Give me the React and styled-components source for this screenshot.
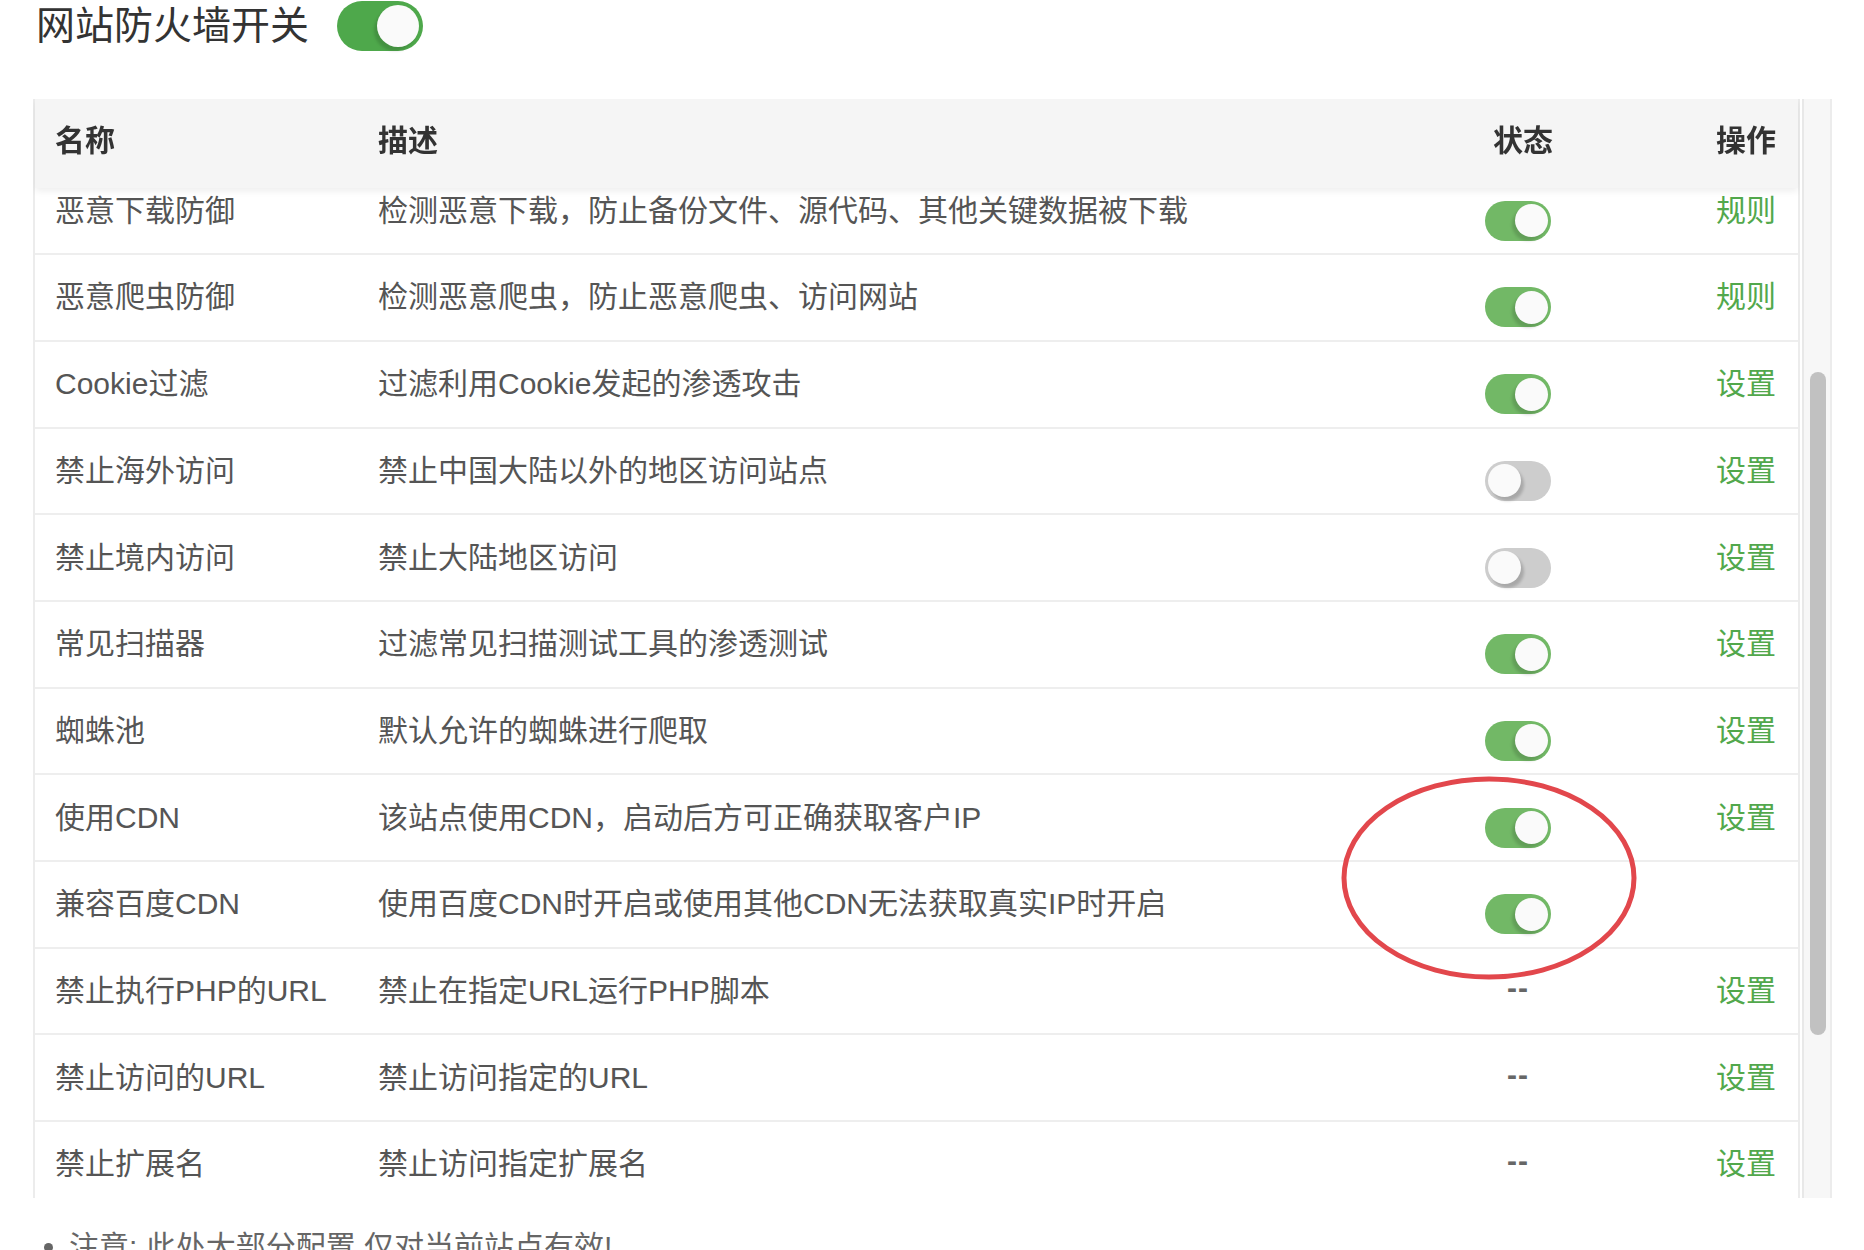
import React, { useLayoutEffect, useRef } from 'react';
import styled, { createGlobalStyle } from 'styled-components';

const GlobalStyle = createGlobalStyle`
  html, body {
    margin: 0;
    padding: 0;
    background: #fff;
  }
  body {
    font-family: "Liberation Sans", "Noto Sans CJK SC", sans-serif;
    color: #555;
    overflow: hidden;
  }
`;

const VIEW_HEIGHT = 1099;
const HEAD_HEIGHT = 89;
const ROW_HEIGHT = 86.7;
const SCROLL_TOP = 453;

const Page = styled.div`
  position: relative;
  width: 1864px;
  height: 1250px;
  overflow: hidden;
  box-sizing: border-box;
  padding: 0 32px 0 33px;
`;

const TitleRow = styled.div`
  display: flex;
  align-items: center;
  gap: 28px;
  height: 52px;
  padding-left: 3px;
`;

const Title = styled.h2`
  margin: 0;
  font-size: 39px;
  font-weight: 400;
  line-height: 52px;
  color: #333;
`;

const Track = styled.span`
  display: inline-flex;
  align-items: center;
  justify-content: ${p => (p.$on ? 'flex-end' : 'flex-start')};
  box-sizing: border-box;
  flex-shrink: 0;
  width: ${p => (p.$lg ? 86 : 66)}px;
  height: ${p => (p.$lg ? 50 : 40)}px;
  padding: 0 ${p => (p.$lg ? 4 : 3)}px;
  margin-top: ${p => (p.$lg ? 0 : 26)}px;
  border-radius: 999px;
  background: ${p => (p.$on ? (p.$lg ? '#4ea84b' : '#72b866') : '#cdcdcd')};
`;

const Knob = styled.span`
  width: ${p => (p.$lg ? 42 : 33)}px;
  height: ${p => (p.$lg ? 42 : 33)}px;
  border-radius: 50%;
  background: #fafafa;
  box-shadow: ${p => (p.$on
    ? '-3px 4px 3px rgba(0, 0, 0, 0.14)'
    : '3px 4px 3px rgba(0, 0, 0, 0.18)')};
`;

const TableBox = styled.div`
  display: flex;
  gap: 2px;
  margin-top: 47px;
  height: ${VIEW_HEIGHT}px;
`;

const ScrollBody = styled.div`
  flex: 1;
  min-width: 0;
  overflow: hidden;
`;

const ScrollBar = styled.div`
  width: 30px;
  flex-shrink: 0;
  box-sizing: border-box;
  background: #f7f7f7;
  border-left: 2px solid #e8e8e8;
  border-right: 2px solid #ececec;
  padding-left: 6px;
`;

const Thumb = styled.div`
  width: 16px;
  border-radius: 8px;
  background: #c1c1c1;
`;

const Table = styled.div`
  border-left: 2px solid #ececec;
  border-right: 2px solid #ececec;
`;

const columns = '323px 1fr 160px 200px';

const HeadRow = styled.div`
  position: sticky;
  top: 0;
  z-index: 2;
  display: grid;
  grid-template-columns: ${columns};
  align-items: center;
  box-sizing: border-box;
  height: ${HEAD_HEIGHT}px;
  padding-bottom: 12px;
  background: #f5f5f5;
  box-shadow: 0 3px 7px rgba(0, 0, 0, 0.07);
  font-size: 30px;
  font-weight: 700;
  color: #333;
`;

const Row = styled.div`
  display: grid;
  grid-template-columns: ${columns};
  align-items: center;
  box-sizing: border-box;
  height: ${ROW_HEIGHT}px;
  padding-bottom: 6px;
  border-bottom: 2px solid #eeeeee;
  font-size: 30px;
  color: #555;
`;

const Cell = styled.div`
  display: flex;
  justify-content: ${p => p.$align || 'flex-start'};
  padding: 0 ${p => (p.$right ? 22 : 20)}px 0 ${p => p.$indent || 20}px;
  white-space: nowrap;
`;

const Dash = styled.span`
  color: #666;
  font-size: 30px;
  font-weight: 700;
  letter-spacing: 1px;
`;

const ActionLink = styled.a`
  color: #52a84c;
  text-decoration: none;
  cursor: pointer;
`;

const Notes = styled.ul`
  margin: 29px 0 0;
  padding-left: 36px;
  font-size: 30px;
  line-height: 40px;
  color: #666;
`;

const Annotation = styled.svg`
  position: absolute;
  left: 1341px;
  top: 776px;
  overflow: visible;
  pointer-events: none;
`;

const rules = [
  { name: 'CC防御', desc: '防御CC攻击，具体防御参数请到全局配置调整', state: true, action: '设置' },
  { name: 'GET-URL过滤', desc: '过滤GET请求中的URL恶意内容', state: true, action: '规则' },
  { name: 'GET-参数过滤', desc: '过滤GET请求中的参数恶意内容', state: true, action: '规则' },
  { name: 'POST过滤', desc: '过滤POST请求中的恶意内容', state: true, action: '规则' },
  { name: 'User-Agent过滤', desc: '过滤恶意User-Agent', state: true, action: '规则' },
  { name: '恶意下载防御', desc: '检测恶意下载，防止备份文件、源代码、其他关键数据被下载', state: true, action: '规则' },
  { name: '恶意爬虫防御', desc: '检测恶意爬虫，防止恶意爬虫、访问网站', state: true, action: '规则' },
  { name: 'Cookie过滤', desc: '过滤利用Cookie发起的渗透攻击', state: true, action: '设置' },
  { name: '禁止海外访问', desc: '禁止中国大陆以外的地区访问站点', state: false, action: '设置' },
  { name: '禁止境内访问', desc: '禁止大陆地区访问', state: false, action: '设置' },
  { name: '常见扫描器', desc: '过滤常见扫描测试工具的渗透测试', state: true, action: '设置' },
  { name: '蜘蛛池', desc: '默认允许的蜘蛛进行爬取', state: true, action: '设置' },
  { name: '使用CDN', desc: '该站点使用CDN，启动后方可正确获取客户IP', state: true, action: '设置' },
  { name: '兼容百度CDN', desc: '使用百度CDN时开启或使用其他CDN无法获取真实IP时开启', state: true, action: null },
  { name: '禁止执行PHP的URL', desc: '禁止在指定URL运行PHP脚本', state: null, action: '设置' },
  { name: '禁止访问的URL', desc: '禁止访问指定的URL', state: null, action: '设置' },
  { name: '禁止扩展名', desc: '禁止访问指定扩展名', state: null, action: '设置' },
  { name: '禁止上传的文件类型', desc: '禁止上传指定类型的文件', state: null, action: '设置' },
  { name: 'URL白名单', desc: '白名单中的URL不受防火墙规则限制', state: null, action: '设置' },
  { name: 'URL黑名单', desc: '禁止访问黑名单中的URL', state: null, action: '设置' },
];

function Switch({ on, large }) {
  return (
    <Track $on={on} $lg={large}>
      <Knob $on={on} $lg={large} />
    </Track>
  );
}

export default function App() {
  const scrollRef = useRef(null);

  useLayoutEffect(() => {
    if (scrollRef.current) scrollRef.current.scrollTop = SCROLL_TOP;
  }, []);

  const contentHeight = HEAD_HEIGHT + rules.length * ROW_HEIGHT;
  const thumbHeight = (VIEW_HEIGHT * VIEW_HEIGHT) / contentHeight;
  const thumbTop = (SCROLL_TOP / contentHeight) * VIEW_HEIGHT;

  return (
    <Page>
      <GlobalStyle />
      <TitleRow>
        <Title>网站防火墙开关</Title>
        <Switch on large />
      </TitleRow>

      <TableBox>
        <ScrollBody ref={scrollRef}>
          <Table>
            <HeadRow>
              <Cell>名称</Cell>
              <Cell>描述</Cell>
              <Cell $align="center" $indent={30}>状态</Cell>
              <Cell $align="flex-end" $right>操作</Cell>
            </HeadRow>
            {rules.map(rule => (
              <Row key={rule.name}>
                <Cell>{rule.name}</Cell>
                <Cell>{rule.desc}</Cell>
                <Cell $align="center">
                  {rule.state === null ? <Dash>--</Dash> : <Switch on={rule.state} />}
                </Cell>
                <Cell $align="flex-end" $right>
                  {rule.action ? <ActionLink>{rule.action}</ActionLink> : null}
                </Cell>
              </Row>
            ))}
          </Table>
        </ScrollBody>
        <ScrollBar>
          <Thumb style={{ marginTop: thumbTop, height: thumbHeight }} />
        </ScrollBar>
      </TableBox>

      <Notes>
        <li>注意: 此处大部分配置,仅对当前站点有效!</li>
      </Notes>

      <Annotation width="296" height="204" viewBox="0 0 296 204">
        <ellipse cx="148" cy="102" rx="145" ry="99" fill="none" stroke="#e2474c" strokeWidth="5" />
      </Annotation>
    </Page>
  );
}
